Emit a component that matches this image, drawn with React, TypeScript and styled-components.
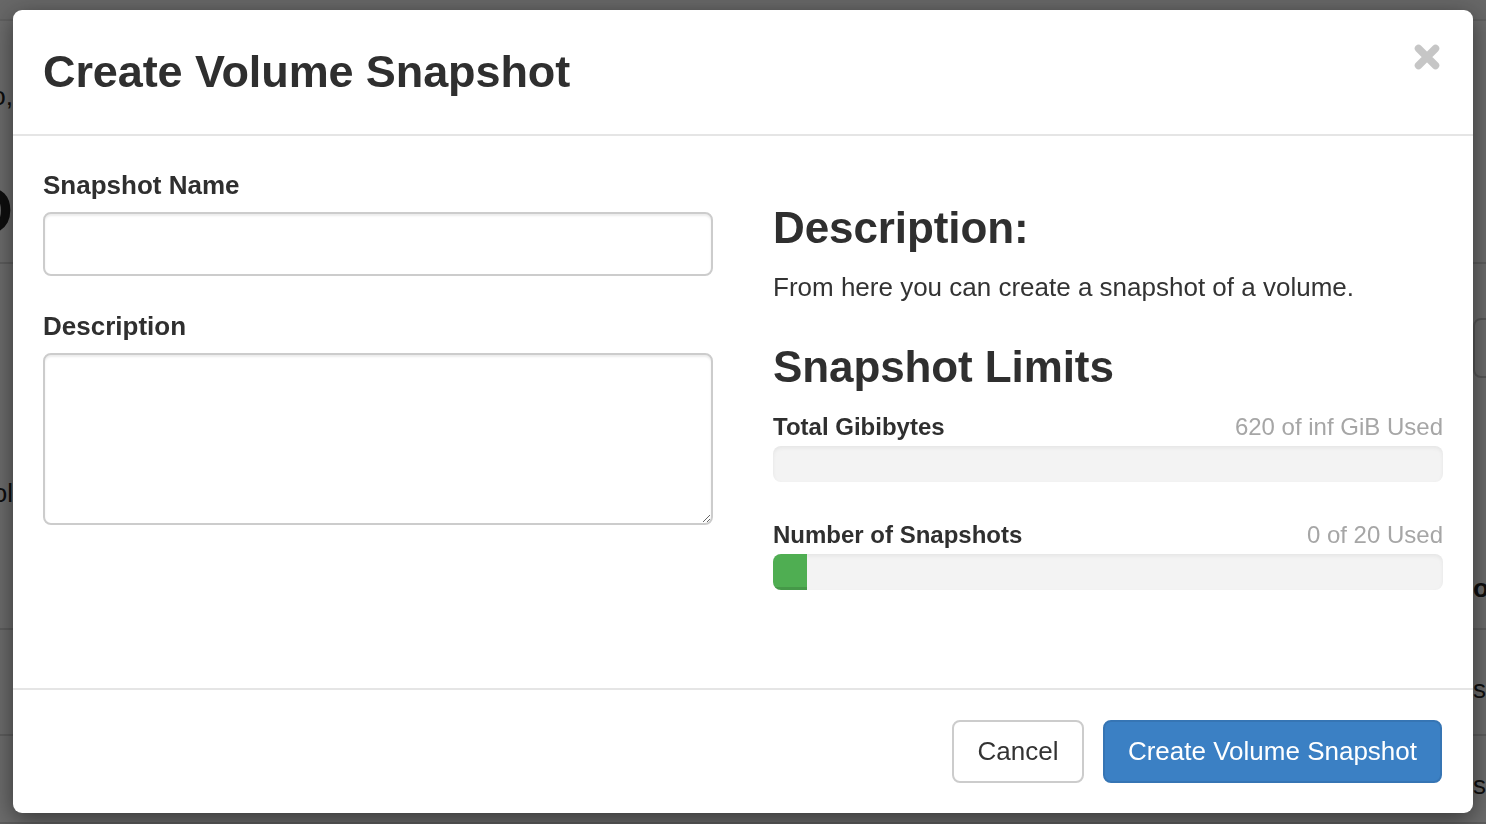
import React from 'react'
import styled, { createGlobalStyle } from 'styled-components'

/**
 * Global
 */

const GlobalStyle = createGlobalStyle`
	html, body {
		margin: 0;
		padding: 0;
		height: 100%;
		overflow: hidden;
	}
	body {
		font-family: 'Liberation Sans', Helvetica, Arial, sans-serif;
		color: #333;
		background: #fff;
	}
	* {
		box-sizing: border-box;
	}
`

/**
 * Page behind the backdrop
 */

const Page = styled.div`
	display: flex;
	flex-direction: column;
	height: 824px;
	background: #fff;
`

const TopBar = styled.div`
	height: 21px;
	background: #f6f6f6;
	border-bottom: 2px solid #e4e4e4;
`

const PageRow = styled.div<{ $height: number }>`
	display: grid;
	grid-template-columns: 13px 1fr 13px;
	height: ${(p) => p.$height}px;
	border-bottom: 2px solid #dcdcdc;
`

const EdgeLeft = styled.div`
	display: flex;
	flex-direction: column;
	align-items: flex-end;
	overflow: hidden;
	white-space: nowrap;
`

const EdgeRight = styled.div`
	display: flex;
	flex-direction: column;
	align-items: flex-start;
	overflow: hidden;
	white-space: nowrap;
`

const Fragment = styled.span<{ $top: number; $size?: number; $bold?: boolean }>`
	margin-top: ${(p) => p.$top}px;
	font-size: ${(p) => p.$size ?? 26}px;
	font-weight: ${(p) => (p.$bold ? 700 : 400)};
	line-height: 1;
	color: #222;
`

const EdgeButton = styled.div`
	margin-top: 54px;
	width: 60px;
	height: 60px;
	border: 2px solid #ccc;
	border-radius: 8px;
`

/**
 * Modal
 */

const Backdrop = styled.div`
	position: fixed;
	inset: 0;
	background: rgba(0, 0, 0, 0.58);
`

const Dialog = styled.div`
	position: fixed;
	top: 10px;
	left: 13px;
	width: 1460px;
	height: 803px;
	display: flex;
	flex-direction: column;
	background: #fff;
	border-radius: 9px;
	box-shadow: 0 6px 24px rgba(0, 0, 0, 0.5);
	overflow: hidden;
`

const Header = styled.div`
	display: flex;
	justify-content: space-between;
	align-items: flex-start;
	padding: 30px 30px;
	border-bottom: 2px solid #e5e5e5;
`

const Title = styled.h4`
	margin: 0;
	font-size: 45px;
	line-height: 64px;
	font-weight: 700;
	color: #2f2f2f;
	letter-spacing: -0.1px;
`

const Close = styled.button`
	margin: 3px 2px 0 0;
	padding: 0;
	border: 0;
	background: none;
	width: 28px;
	height: 28px;
	cursor: pointer;
	color: #c6c6c6;
`

const Body = styled.div`
	flex: 1;
	display: grid;
	grid-template-columns: 1fr 1fr;
	column-gap: 60px;
	padding: 30px;
`

const Column = styled.div`
	display: flex;
	flex-direction: column;
`

const Label = styled.label`
	display: block;
	font-size: 26px;
	line-height: 37px;
	font-weight: 700;
	color: #2f2f2f;
	margin: 1px 0 8px;
`

const Group = styled.div`
	margin-bottom: 31px;
`

const Input = styled.input`
	display: block;
	width: 100%;
	height: 64px;
	padding: 12px 24px;
	font-size: 26px;
	font-family: inherit;
	border: 2px solid #ccc;
	border-radius: 8px;
	box-shadow: inset 0 2px 2px rgba(0, 0, 0, 0.075);
	outline: none;
`

const TextArea = styled.textarea`
	display: block;
	width: 100%;
	height: 172px;
	padding: 12px 24px;
	font-size: 26px;
	font-family: inherit;
	border: 2px solid #ccc;
	border-radius: 8px;
	box-shadow: inset 0 2px 2px rgba(0, 0, 0, 0.075);
	outline: none;
	resize: vertical;
`

const Heading = styled.h3<{ $top: number }>`
	margin: ${(p) => p.$top}px 0 0;
	font-size: 44px;
	line-height: 48px;
	font-weight: 700;
	color: #2f2f2f;
	letter-spacing: -0.1px;
`

const Text = styled.p`
	margin: 17px 0 0;
	font-size: 26px;
	line-height: 37px;
	color: #333;
`

const Quota = styled.div<{ $top: number }>`
	margin-top: ${(p) => p.$top}px;
`

const QuotaHead = styled.div`
	display: flex;
	justify-content: space-between;
	align-items: baseline;
	font-size: 24px;
	line-height: 37px;
`

const QuotaName = styled.span`
	font-weight: 700;
	color: #2f2f2f;
`

const QuotaUsed = styled.span`
	color: #a6a6a6;
`

const Bar = styled.div`
	height: 36px;
	margin-top: 1px;
	background: #f3f3f3;
	border-radius: 8px;
	box-shadow: inset 0 2px 4px rgba(0, 0, 0, 0.06);
	overflow: hidden;
`

const Fill = styled.div`
	height: 100%;
	background: #4fae52;
	box-shadow: inset 0 -3px 0 rgba(0, 0, 0, 0.12);
`

const Footer = styled.div`
	display: flex;
	justify-content: flex-end;
	gap: 19px;
	padding: 30px 31px 30px;
	border-top: 2px solid #e5e5e5;
`

const Button = styled.button<{ $primary?: boolean }>`
	height: 63px;
	padding: 0 ${(p) => (p.$primary ? 23 : 23.5)}px;
	font-family: inherit;
	font-size: 26px;
	border-radius: 8px;
	border: 2px solid ${(p) => (p.$primary ? '#3675b4' : '#ccc')};
	background: ${(p) => (p.$primary ? '#3b80c4' : '#fff')};
	color: ${(p) => (p.$primary ? '#fff' : '#333')};
	cursor: pointer;
`

const CloseIcon = () => (
	<svg width="28" height="28" viewBox="0 0 28 28">
		<path
			d="M5.5 5.5 L22.5 22.5 M22.5 5.5 L5.5 22.5"
			stroke="currentColor"
			strokeWidth="7.5"
			strokeLinecap="round"
		/>
	</svg>
)

interface IQuota {
	name: string
	used: string
	fill?: number
	top: number
}

const quotas: IQuota[] = [
	{ name: 'Total Gibibytes', used: '620 of inf GiB Used', top: 17 },
	{ name: 'Number of Snapshots', used: '0 of 20 Used', fill: 34, top: 34 },
]

export default function App() {
	return (
		<>
			<GlobalStyle />
			<Page>
				<TopBar />
				<PageRow $height={248}>
					<EdgeLeft>
						<Fragment $top={62}>Info,</Fragment>
						<Fragment $top={70} $size={64} $bold>
							VO
						</Fragment>
					</EdgeLeft>
					<div />
					<EdgeRight />
				</PageRow>
				<PageRow $height={372}>
					<EdgeLeft>
						<Fragment $top={216}>Pool</Fragment>
					</EdgeLeft>
					<div />
					<EdgeRight>
						<EdgeButton />
						<Fragment $top={197} $bold>
							occ
						</Fragment>
					</EdgeRight>
				</PageRow>
				<PageRow $height={108}>
					<EdgeLeft />
					<div />
					<EdgeRight>
						<Fragment $top={46}>ss</Fragment>
					</EdgeRight>
				</PageRow>
				<PageRow $height={90}>
					<EdgeLeft />
					<div />
					<EdgeRight>
						<Fragment $top={36}>ss</Fragment>
					</EdgeRight>
				</PageRow>
			</Page>
			<Backdrop />
			<Dialog>
				<Header>
					<Title>Create Volume Snapshot</Title>
					<Close aria-label="Close">
						<CloseIcon />
					</Close>
				</Header>
				<Body>
					<Column>
						<Group>
							<Label>Snapshot Name</Label>
							<Input type="text" />
						</Group>
						<Group>
							<Label>Description</Label>
							<TextArea />
						</Group>
					</Column>
					<Column>
						<Heading $top={38}>Description:</Heading>
						<Text>From here you can create a snapshot of a volume.</Text>
						<Heading $top={37}>Snapshot Limits</Heading>
						{quotas.map((q) => (
							<Quota key={q.name} $top={q.top}>
								<QuotaHead>
									<QuotaName>{q.name}</QuotaName>
									<QuotaUsed>{q.used}</QuotaUsed>
								</QuotaHead>
								<Bar>
									{q.fill ? <Fill style={{ width: q.fill }} /> : null}
								</Bar>
							</Quota>
						))}
					</Column>
				</Body>
				<Footer>
					<Button>Cancel</Button>
					<Button $primary>Create Volume Snapshot</Button>
				</Footer>
			</Dialog>
		</>
	)
}
